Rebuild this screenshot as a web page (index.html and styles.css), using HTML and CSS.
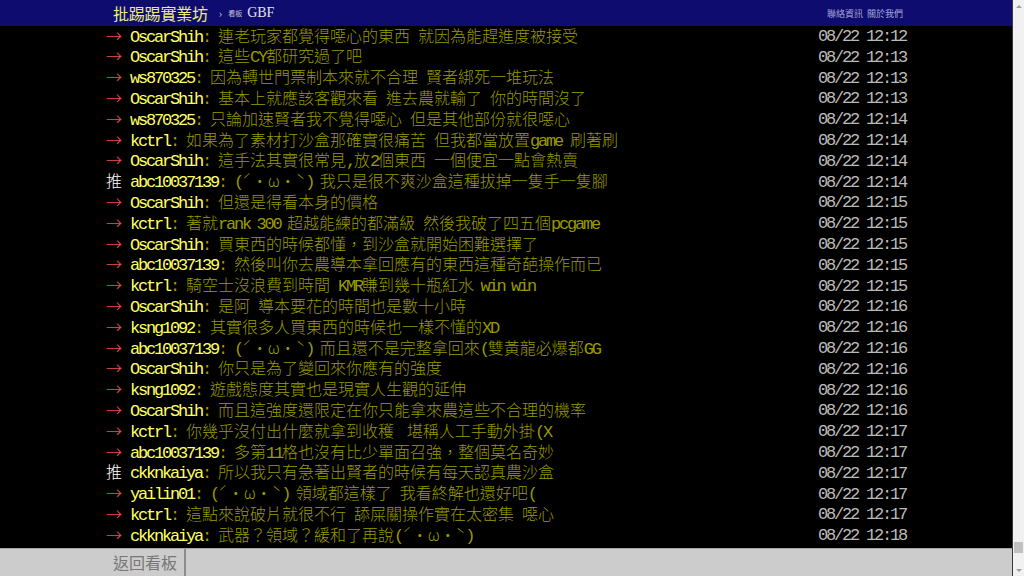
FILE: index.html
```html
<!DOCTYPE html>
<html lang="zh-Hant">
<head>
<meta charset="utf-8">
<title>GBF - 批踢踢實業坊</title>
<link rel="stylesheet" href="styles.css">
</head>
<body>
<div class="viewport">
  <div class="page">
    <div class="topbar">
      <div class="wrap bar-inner">
        <a class="logo">批踢踢實業坊</a>
        <span class="crumb-sep">›</span>
        <span class="crumb-label">看板</span>
        <a class="board">GBF</a>
        <div class="links"><a>聯絡資訊</a><a>關於我們</a></div>
      </div>
    </div>
    <div class="main">
      <div class="wrap screen">
        <div class="push"><span class="tag arrow">→</span><span class="m uid">OscarShih</span><span class="m ct">: </span><span class="ct">連老玩家都覺得噁心的東西 就因為能趕進度被接受</span><span class="m time">08/22 12:12</span></div>
        <div class="push"><span class="tag arrow">→</span><span class="m uid">OscarShih</span><span class="m ct">: </span><span class="ct">這些<span class="m">CY</span>都研究過了吧</span><span class="m time">08/22 12:13</span></div>
        <div class="push"><span class="tag arrow">→</span><span class="m uid">ws870325</span><span class="m ct">: </span><span class="ct">因為轉世門票制本來就不合理 賢者綁死一堆玩法</span><span class="m time">08/22 12:13</span></div>
        <div class="push"><span class="tag arrow">→</span><span class="m uid">OscarShih</span><span class="m ct">: </span><span class="ct">基本上就應該客觀來看 進去農就輸了 你的時間沒了</span><span class="m time">08/22 12:13</span></div>
        <div class="push"><span class="tag arrow">→</span><span class="m uid">ws870325</span><span class="m ct">: </span><span class="ct">只論加速賢者我不覺得噁心 但是其他部份就很噁心</span><span class="m time">08/22 12:14</span></div>
        <div class="push"><span class="tag arrow">→</span><span class="m uid">kctrl</span><span class="m ct">: </span><span class="ct">如果為了素材打沙盒那確實很痛苦 但我都當放置<span class="m">game</span> 刷著刷</span><span class="m time">08/22 12:14</span></div>
        <div class="push"><span class="tag arrow">→</span><span class="m uid">OscarShih</span><span class="m ct">: </span><span class="ct">這手法其實很常見<span class="m">,</span>放<span class="m">2</span>個東西 一個便宜一點會熱賣</span><span class="m time">08/22 12:14</span></div>
        <div class="push"><span class="tag up">推</span><span class="m uid">abc10037139</span><span class="m ct">: </span><span class="ct"><span class="m">(</span><span class="k">ˊ・ω・ˋ</span><span class="m">) </span>我只是很不爽沙盒這種拔掉一隻手一隻腳</span><span class="m time">08/22 12:14</span></div>
        <div class="push"><span class="tag arrow">→</span><span class="m uid">OscarShih</span><span class="m ct">: </span><span class="ct">但還是得看本身的價格</span><span class="m time">08/22 12:15</span></div>
        <div class="push"><span class="tag arrow">→</span><span class="m uid">kctrl</span><span class="m ct">: </span><span class="ct">著就<span class="m">rank 300 </span>超越能練的都滿級 然後我破了四五個<span class="m">pcgame</span></span><span class="m time">08/22 12:15</span></div>
        <div class="push"><span class="tag arrow">→</span><span class="m uid">OscarShih</span><span class="m ct">: </span><span class="ct">買東西的時候都懂，到沙盒就開始困難選擇了</span><span class="m time">08/22 12:15</span></div>
        <div class="push"><span class="tag arrow">→</span><span class="m uid">abc10037139</span><span class="m ct">: </span><span class="ct">然後叫你去農導本拿回應有的東西這種奇葩操作而已</span><span class="m time">08/22 12:15</span></div>
        <div class="push"><span class="tag arrow">→</span><span class="m uid">kctrl</span><span class="m ct">: </span><span class="ct">騎空士沒浪費到時間 <span class="m">KMR</span>賺到幾十瓶紅水<span class="m"> win win</span></span><span class="m time">08/22 12:15</span></div>
        <div class="push"><span class="tag arrow">→</span><span class="m uid">OscarShih</span><span class="m ct">: </span><span class="ct">是阿 導本要花的時間也是數十小時</span><span class="m time">08/22 12:16</span></div>
        <div class="push"><span class="tag arrow">→</span><span class="m uid">ksng1092</span><span class="m ct">: </span><span class="ct">其實很多人買東西的時候也一樣不懂的<span class="m">XD</span></span><span class="m time">08/22 12:16</span></div>
        <div class="push"><span class="tag arrow">→</span><span class="m uid">abc10037139</span><span class="m ct">: </span><span class="ct"><span class="m">(</span><span class="k">ˊ・ω・ˋ</span><span class="m">) </span>而且還不是完整拿回來<span class="m">(</span>雙黃龍必爆都<span class="m">GG</span></span><span class="m time">08/22 12:16</span></div>
        <div class="push"><span class="tag arrow">→</span><span class="m uid">OscarShih</span><span class="m ct">: </span><span class="ct">你只是為了變回來你應有的強度</span><span class="m time">08/22 12:16</span></div>
        <div class="push"><span class="tag arrow">→</span><span class="m uid">ksng1092</span><span class="m ct">: </span><span class="ct">遊戲態度其實也是現實人生觀的延伸</span><span class="m time">08/22 12:16</span></div>
        <div class="push"><span class="tag arrow">→</span><span class="m uid">OscarShih</span><span class="m ct">: </span><span class="ct">而且這強度還限定在你只能拿來農這些不合理的機率</span><span class="m time">08/22 12:16</span></div>
        <div class="push"><span class="tag arrow">→</span><span class="m uid">kctrl</span><span class="m ct">: </span><span class="ct">你幾乎沒付出什麼就拿到收穫<span class="m">&nbsp; </span>堪稱人工手動外掛<span class="m">(X</span></span><span class="m time">08/22 12:17</span></div>
        <div class="push"><span class="tag arrow">→</span><span class="m uid">abc10037139</span><span class="m ct">: </span><span class="ct">多第<span class="m">11</span>格也沒有比少單面召強，整個莫名奇妙</span><span class="m time">08/22 12:17</span></div>
        <div class="push"><span class="tag up">推</span><span class="m uid">ckknkaiya</span><span class="m ct">: </span><span class="ct">所以我只有急著出賢者的時候有每天認真農沙盒</span><span class="m time">08/22 12:17</span></div>
        <div class="push"><span class="tag arrow">→</span><span class="m uid">yailin01</span><span class="m ct">: </span><span class="ct"><span class="m">(</span><span class="k">ˊ・ω・ˋ</span><span class="m">) </span>領域都這樣了 我看終解也還好吧<span class="m">(</span></span><span class="m time">08/22 12:17</span></div>
        <div class="push"><span class="tag arrow">→</span><span class="m uid">kctrl</span><span class="m ct">: </span><span class="ct">這點來說破片就很不行 舔屎關操作實在太密集 噁心</span><span class="m time">08/22 12:17</span></div>
        <div class="push"><span class="tag arrow">→</span><span class="m uid">ckknkaiya</span><span class="m ct">: </span><span class="ct">武器？領域？緩和了再說<span class="m">(</span><span class="k">ˊ・ω・ˋ</span><span class="m">)</span></span><span class="m time">08/22 12:18</span></div>
      </div>
    </div>
    <div class="navbar">
      <div class="wrap nav-inner">
        <a class="back">返回看板</a>
      </div>
    </div>
  </div>
  <div class="scrollbar">
    <div class="sb-btn"><span class="tri-up"></span></div>
    <div class="sb-track"><div class="sb-thumb"></div></div>
    <div class="sb-btn"><span class="tri-down"></span></div>
  </div>
</div>
</body>
</html>
```
FILE: styles.css
```css
* { box-sizing: border-box; }
html, body { margin: 0; padding: 0; height: 100%; overflow: hidden; background: #000; }
body { font-family: "Noto Sans CJK TC", sans-serif; }

.viewport { display: flex; height: 576px; width: 1024px; }
.page { flex: 1; display: flex; flex-direction: column; overflow: hidden; background: #000; }
.wrap { width: 800px; margin: 0 auto; }

/* top bar */
.topbar { height: 26px; flex: none; background: #0e0c6e; position: relative; z-index: 2; }
.bar-inner { height: 100%; display: flex; align-items: center; }
.logo { color: #ecec7a; font-size: 16px; line-height: 26px; margin-left: 7px; letter-spacing: -0.2px; }
.crumb-sep { color: #c8c8d8; font-size: 11px; margin-left: 11px; }
.crumb-label { color: #c8c8d8; font-size: 7px; margin-left: 6px; }
.board { color: #e2e2ea; font-family: "Liberation Serif", serif; font-size: 14px; margin-left: 5px; }
.links { margin-left: auto; margin-right: 3px; display: flex; gap: 4px; }
.links a { color: #a6a6d8; font-size: 9px; }

/* content */
.main { flex: 1; min-height: 0; overflow: hidden; margin-top: -1.4px; }
.push { height: 20.8px; line-height: 20.8px; white-space: nowrap; font-size: 16px; }
.push > span, .push span span { line-height: 1; }
.push > .tag { display: inline-block; width: 24px; height: 20.8px; line-height: 20.8px; vertical-align: top; font-family: "Noto Sans CJK TC", sans-serif; font-size: 16px; font-weight: 300; }
.tag.arrow { color: #e85050; }
.tag.up { color: #fff; }
.m { font-family: "Liberation Mono", monospace; font-size: 17px; letter-spacing: -2.2px; }
.ct .m { font-size: 17px; }
.uid { color: #ff6; }
.ct { color: #990; }
span.ct:not(.m) { font-family: "Liberation Mono", "Noto Sans CJK TC", monospace; font-size: 16px; font-weight: 300; word-spacing: -1.6px; }
.k { font-family: "Noto Sans CJK TC", sans-serif; }
.push > .time { float: right; color: #bbb; line-height: 20.8px; height: 20.8px; padding-top: 2.4px; }

/* bottom navigation */
.navbar { height: 28px; flex: none; background: #cccccc; border-top: 1px solid #a8a8a8; position: relative; z-index: 2; }
.nav-inner { display: flex; height: 100%; }
.back { color: #777; font-size: 16px; line-height: 27px; padding: 0 7px; border-right: 2px solid #8c8c8c; }

/* scrollbar */
.scrollbar { width: 12px; flex: none; background: #f1f1f1; display: flex; flex-direction: column; border-left: 1px solid #3a3a3a; }
.sb-btn { height: 12px; display: flex; align-items: center; justify-content: center; }
.tri-up { width: 0; height: 0; border-left: 3px solid transparent; border-right: 3px solid transparent; border-bottom: 3px solid #a0a0a0; }
.tri-down { width: 0; height: 0; border-left: 3px solid transparent; border-right: 3px solid transparent; border-top: 3px solid #a0a0a0; }
.sb-track { flex: 1; display: flex; flex-direction: column; justify-content: flex-end; padding: 0 1px 11px 1px; }
.sb-thumb { height: 11px; background: #c1c1c1; }
```
